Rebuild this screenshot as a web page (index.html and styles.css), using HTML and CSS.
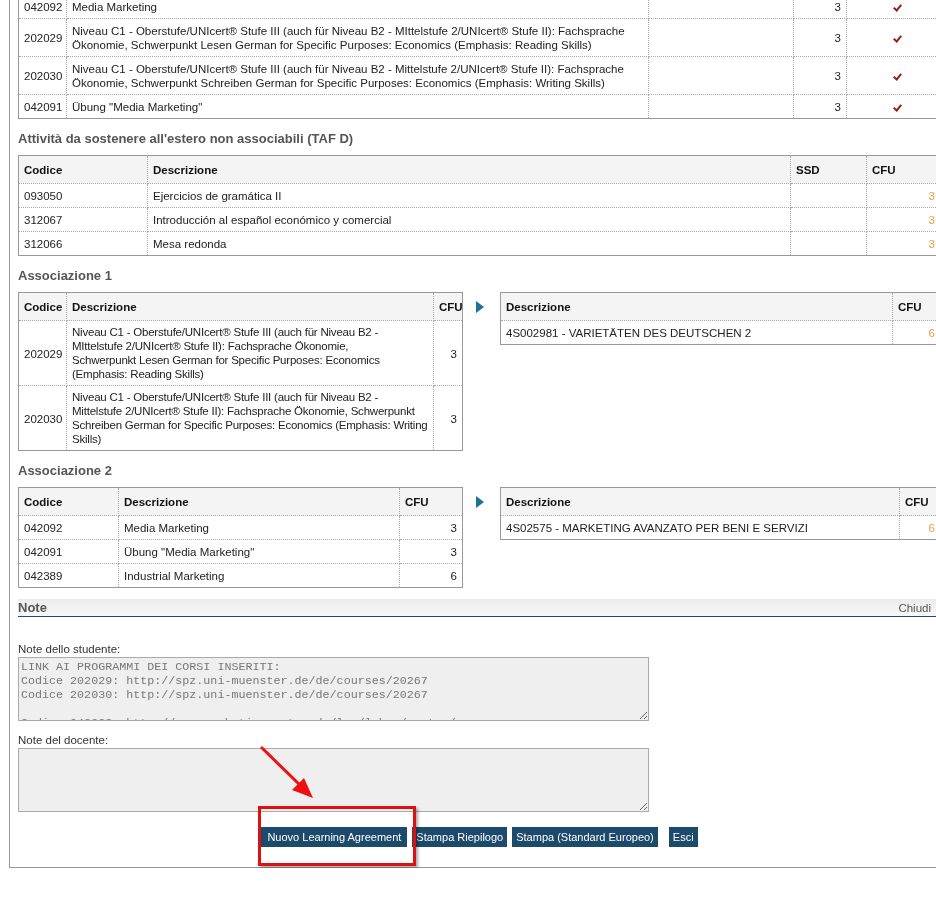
FILE: index.html
```html
<!DOCTYPE html>
<html>
<head>
    <title>Learning Agreement</title>
    <link rel="stylesheet" href="styles.css">
</head>
<body>
    <div class="page">

        <!-- Activities already associated (list continues above) -->
        <table class="grid top-list">
            <colgroup>
                <col style="width:48px"><col style="width:582px"><col style="width:145px"><col style="width:53px"><col>
            </colgroup>
            <tbody>
                <tr>
                    <td>042092</td>
                    <td>Media Marketing</td>
                    <td></td>
                    <td class="num">3</td>
                    <td class="tick"><span class="check"></span></td>
                </tr>
                <tr>
                    <td>202029</td>
                    <td>Niveau C1 - Oberstufe/UNIcert® Stufe III (auch für Niveau B2 - MIttelstufe 2/UNIcert® Stufe II): Fachsprache Ökonomie, Schwerpunkt Lesen German for Specific Purposes: Economics (Emphasis: Reading Skills)</td>
                    <td></td>
                    <td class="num">3</td>
                    <td class="tick"><span class="check"></span></td>
                </tr>
                <tr>
                    <td>202030</td>
                    <td>Niveau C1 - Oberstufe/UNIcert® Stufe III (auch für Niveau B2 - Mittelstufe 2/UNIcert® Stufe II): Fachsprache Ökonomie, Schwerpunkt Schreiben German for Specific Purposes: Economics (Emphasis: Writing Skills)</td>
                    <td></td>
                    <td class="num">3</td>
                    <td class="tick"><span class="check"></span></td>
                </tr>
                <tr>
                    <td>042091</td>
                    <td>Übung "Media Marketing"</td>
                    <td></td>
                    <td class="num">3</td>
                    <td class="tick"><span class="check"></span></td>
                </tr>
            </tbody>
        </table>

        <h3 class="section-title">Attività da sostenere all'estero non associabili (TAF D)</h3>
        <table class="grid">
            <colgroup>
                <col style="width:129px"><col style="width:643px"><col style="width:76px"><col>
            </colgroup>
            <thead>
                <tr><th>Codice</th><th>Descrizione</th><th>SSD</th><th>CFU</th></tr>
            </thead>
            <tbody>
                <tr><td>093050</td><td>Ejercicios de gramática II</td><td></td><td class="num cfu">3</td></tr>
                <tr><td>312067</td><td>Introducción al español económico y comercial</td><td></td><td class="num cfu">3</td></tr>
                <tr><td>312066</td><td>Mesa redonda</td><td></td><td class="num cfu">3</td></tr>
            </tbody>
        </table>

        <h3 class="section-title">Associazione 1</h3>
        <div class="assoc">
            <table class="grid assoc-left">
                <colgroup>
                    <col style="width:48px"><col><col style="width:29px">
                </colgroup>
                <thead>
                    <tr><th>Codice</th><th>Descrizione</th><th>CFU</th></tr>
                </thead>
                <tbody>
                    <tr>
                        <td>202029</td>
                        <td class="long">Niveau C1 - Oberstufe/UNIcert® Stufe III (auch für Niveau B2 - MIttelstufe 2/UNIcert® Stufe II): Fachsprache Ökonomie, Schwerpunkt&nbsp;Lesen German for Specific Purposes: Economics (Emphasis: Reading Skills)</td>
                        <td class="num">3</td>
                    </tr>
                    <tr>
                        <td>202030</td>
                        <td class="long">Niveau C1 - Oberstufe/UNIcert® Stufe III (auch für Niveau B2 - Mittelstufe 2/UNIcert® Stufe II): Fachsprache Ökonomie, Schwerpunkt Schreiben German for Specific Purposes: Economics (Emphasis: Writing Skills)</td>
                        <td class="num">3</td>
                    </tr>
                </tbody>
            </table>
            <span class="assoc-arrow"></span>
            <table class="grid assoc-right">
                <colgroup>
                    <col><col style="width:48px">
                </colgroup>
                <thead>
                    <tr><th>Descrizione</th><th>CFU</th></tr>
                </thead>
                <tbody>
                    <tr><td>4S002981 - VARIETÄTEN DES DEUTSCHEN 2</td><td class="num cfu">6</td></tr>
                </tbody>
            </table>
        </div>

        <h3 class="section-title">Associazione 2</h3>
        <div class="assoc">
            <table class="grid assoc-left">
                <colgroup>
                    <col style="width:100px"><col><col style="width:63px">
                </colgroup>
                <thead>
                    <tr><th>Codice</th><th>Descrizione</th><th>CFU</th></tr>
                </thead>
                <tbody>
                    <tr><td>042092</td><td>Media Marketing</td><td class="num">3</td></tr>
                    <tr><td>042091</td><td>Übung "Media Marketing"</td><td class="num">3</td></tr>
                    <tr><td>042389</td><td>Industrial Marketing</td><td class="num">6</td></tr>
                </tbody>
            </table>
            <span class="assoc-arrow"></span>
            <table class="grid assoc-right">
                <colgroup>
                    <col><col style="width:41px">
                </colgroup>
                <thead>
                    <tr><th>Descrizione</th><th>CFU</th></tr>
                </thead>
                <tbody>
                    <tr><td>4S02575 - MARKETING AVANZATO PER BENI E SERVIZI</td><td class="num cfu">6</td></tr>
                </tbody>
            </table>
        </div>

        <!-- Notes -->
        <div class="note-bar">
            <span class="note-title">Note</span>
            <span class="note-close">Chiudi</span>
        </div>

        <div class="note-field">
            <label for="studentNotes">Note dello studente:</label>
            <textarea id="studentNotes" readonly>LINK AI PROGRAMMI DEI CORSI INSERITI:
Codice 202029: http://spz.uni-muenster.de/de/courses/20267
Codice 202030: http://spz.uni-muenster.de/de/courses/20267

Codice 042092: http://www.marketingcenter.de/lmm/lehre/master/
Codice 042091: http://www.marketingcenter.de/lmm/lehre/master/</textarea>
        </div>

        <div class="note-field">
            <label for="teacherNotes">Note del docente:</label>
            <textarea id="teacherNotes" readonly></textarea>
        </div>

        <div class="actions">
            <button type="button" class="btn-new">Nuovo Learning Agreement</button>
            <button type="button">Stampa Riepilogo</button>
            <button type="button">Stampa (Standard Europeo)</button>
            <button type="button" class="btn-exit">Esci</button>
        </div>

        <!-- Annotation drawn over the screenshot -->
        <div class="callout-box"></div>
        <svg class="callout-arrow" width="70" height="70" viewBox="0 0 70 70">
            <line x1="3" y1="3" x2="44" y2="43" stroke="#e11" stroke-width="3"/>
            <polygon points="55,54 34,46 46,34" fill="#e11"/>
        </svg>
    </div>
</body>
</html>
```

FILE: styles.css
```css
html, body {
    overflow-x: hidden;
}

body {
    margin: 0;
    padding: 0;
    background-color: #fff;
    font-family: "Liberation Sans", Arial, sans-serif;
    font-size: 11.5px;
    color: #222;
}

.page {
    position: relative;
    width: 923px;
    margin-left: 9px;
    padding: 0 8px 20px 8px;
    border-left: 1px solid #999;
    border-bottom: 1px solid #999;
}

/* Tables */
.grid {
    width: 100%;
    border-collapse: collapse;
    table-layout: fixed;
    border: 1px solid #999;
}

.grid th,
.grid td {
    border: 1px dotted #aaa;
    padding: 5px 5px 4px 5px;
    line-height: 14px;
    text-align: left;
    vertical-align: middle;
}

.grid th {
    padding-top: 7px;
    padding-bottom: 6px;
    background-color: #f4f4f4;
    font-weight: bold;
    color: #111;
}

.grid td.num {
    text-align: right;
}

.grid td.cfu {
    color: #e8a040;
}

.grid td.long {
    padding: 4px 2px 4px 5px;
    letter-spacing: -0.22px;
}

.top-list {
    margin-top: -6px;
    border-top: none;
}

.top-list td {
    padding-top: 5px;
    padding-bottom: 4px;
}

.grid td.tick {
    text-align: center;
    padding-left: 12px;
}

.check {
    display: inline-block;
    width: 3px;
    height: 6px;
    border-right: 2px solid #9b1c1c;
    border-bottom: 2px solid #9b1c1c;
    transform: rotate(40deg);
}

.section-title {
    margin: 12px 0 8px 0;
    font-size: 13px;
    line-height: 16px;
    font-weight: bold;
    color: #555;
}

/* Associations */
.assoc {
    display: flex;
    align-items: flex-start;
}

.assoc-left {
    width: 445px;
    flex: none;
}

.assoc-right {
    flex: 1;
    width: auto;
}

.assoc-arrow {
    flex: none;
    width: 0;
    height: 0;
    margin: 9px 16px 0 13px;
    border-top: 6px solid transparent;
    border-bottom: 6px solid transparent;
    border-left: 8px solid #1d7196;
}

/* Notes */
.note-bar {
    display: flex;
    justify-content: space-between;
    align-items: center;
    margin-top: 11px;
    height: 17px;
    background: linear-gradient(#ebebeb, #f9f9f9);
    border-bottom: 1px solid #2e4756;
}

.note-title {
    font-size: 13px;
    font-weight: bold;
    color: #555;
}

.note-close {
    padding-right: 10px;
    color: #555;
}

.note-field {
    margin-top: 25px;
}

.note-field + .note-field {
    margin-top: 12px;
}

.note-field label {
    display: block;
    line-height: 14px;
    margin-bottom: 1px;
    color: #333;
}

.note-field textarea {
    display: block;
    box-sizing: border-box;
    width: 631px;
    height: 64px;
    margin: 0;
    padding: 2px 2px;
    border: 1px solid #aaa;
    background-color: #efefef;
    font-family: "Liberation Mono", "Courier New", monospace;
    font-size: 11.7px;
    line-height: 14px;
    color: #777;
    overflow-y: scroll;
}

.note-field textarea::-webkit-scrollbar {
    width: 14px;
    background-color: #efefef;
}

.note-field textarea::-webkit-scrollbar-thumb {
    background-color: #efefef;
}

#teacherNotes {
    overflow-y: hidden;
}

/* Buttons */
.actions {
    display: flex;
    justify-content: center;
    gap: 5px;
    margin-top: 15px;
}

.actions button {
    height: 20px;
    padding: 0 4px;
    border: none;
    background-color: #1b4a6b;
    color: #fff;
    font-family: "Liberation Sans", Arial, sans-serif;
    font-size: 11px;
}

.actions .btn-new {
    padding: 0 6px;
}

.actions .btn-exit {
    margin-left: 6px;
}

/* Red annotation */
.callout-box {
    position: absolute;
    left: 248px;
    top: 812px;
    width: 152px;
    height: 54px;
    border: 3px solid #dd1111;
    box-shadow: 2px 2px 3px rgba(0, 0, 0, 0.35);
}

.callout-arrow {
    position: absolute;
    left: 248px;
    top: 750px;
}
```
